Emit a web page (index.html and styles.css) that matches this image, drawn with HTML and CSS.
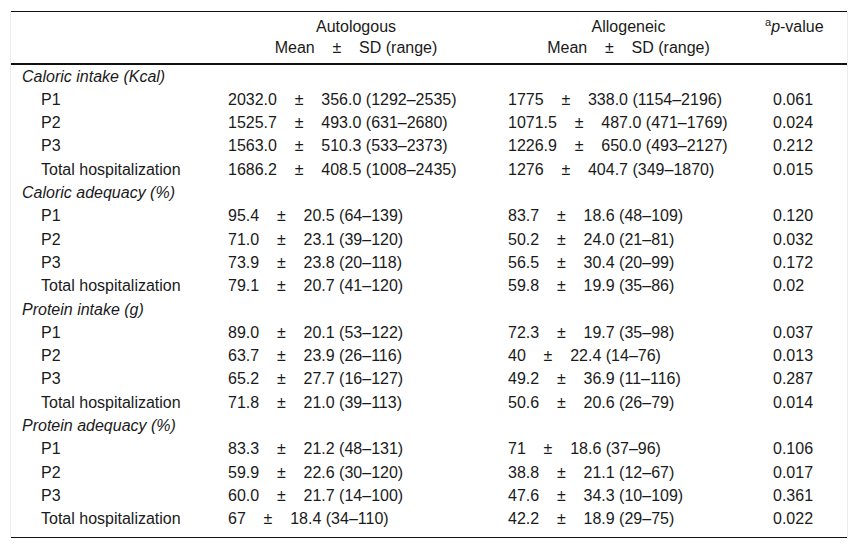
FILE: index.html
```html
<!DOCTYPE html>
<html>
<head>
<meta charset="utf-8">
<link rel="stylesheet" href="styles.css">
</head>
<body>
<div class="wrap">
<table class="tbl">
<colgroup><col class="c-label"><col class="c-auto"><col class="c-allo"><col class="c-p"></colgroup>
<thead>
<tr class="h1">
<th></th>
<th class="hc">Autologous</th>
<th class="hc">Allogeneic</th>
<th class="hp" rowspan="2"><sup>a</sup><i>p</i>-value</th>
</tr>
<tr class="h2">
<th></th>
<th class="hc">Mean<span class="pm">±</span>SD (range)</th>
<th class="hc">Mean<span class="pm">±</span>SD (range)</th>
</tr>
</thead>
<tbody>
<tr><td class="grp" colspan="4">Caloric intake (Kcal)</td></tr>
<tr><td class="lbl">P1</td><td>2032.0<span class="pm">±</span>356.0 (1292–2535)</td><td>1775<span class="pm">±</span>338.0 (1154–2196)</td><td>0.061</td></tr>
<tr><td class="lbl">P2</td><td>1525.7<span class="pm">±</span>493.0 (631–2680)</td><td>1071.5<span class="pm">±</span>487.0 (471–1769)</td><td>0.024</td></tr>
<tr><td class="lbl">P3</td><td>1563.0<span class="pm">±</span>510.3 (533–2373)</td><td>1226.9<span class="pm">±</span>650.0 (493–2127)</td><td>0.212</td></tr>
<tr><td class="lbl">Total hospitalization</td><td>1686.2<span class="pm">±</span>408.5 (1008–2435)</td><td>1276<span class="pm">±</span>404.7 (349–1870)</td><td>0.015</td></tr>
<tr><td class="grp" colspan="4">Caloric adequacy (%)</td></tr>
<tr><td class="lbl">P1</td><td>95.4<span class="pm">±</span>20.5 (64–139)</td><td>83.7<span class="pm">±</span>18.6 (48–109)</td><td>0.120</td></tr>
<tr><td class="lbl">P2</td><td>71.0<span class="pm">±</span>23.1 (39–120)</td><td>50.2<span class="pm">±</span>24.0 (21–81)</td><td>0.032</td></tr>
<tr><td class="lbl">P3</td><td>73.9<span class="pm">±</span>23.8 (20–118)</td><td>56.5<span class="pm">±</span>30.4 (20–99)</td><td>0.172</td></tr>
<tr><td class="lbl">Total hospitalization</td><td>79.1<span class="pm">±</span>20.7 (41–120)</td><td>59.8<span class="pm">±</span>19.9 (35–86)</td><td>0.02</td></tr>
<tr><td class="grp" colspan="4">Protein intake (g)</td></tr>
<tr><td class="lbl">P1</td><td>89.0<span class="pm">±</span>20.1 (53–122)</td><td>72.3<span class="pm">±</span>19.7 (35–98)</td><td>0.037</td></tr>
<tr><td class="lbl">P2</td><td>63.7<span class="pm">±</span>23.9 (26–116)</td><td>40<span class="pm">±</span>22.4 (14–76)</td><td>0.013</td></tr>
<tr><td class="lbl">P3</td><td>65.2<span class="pm">±</span>27.7 (16–127)</td><td>49.2<span class="pm">±</span>36.9 (11–116)</td><td>0.287</td></tr>
<tr><td class="lbl">Total hospitalization</td><td>71.8<span class="pm">±</span>21.0 (39–113)</td><td>50.6<span class="pm">±</span>20.6 (26–79)</td><td>0.014</td></tr>
<tr><td class="grp" colspan="4">Protein adequacy (%)</td></tr>
<tr><td class="lbl">P1</td><td>83.3<span class="pm">±</span>21.2 (48–131)</td><td>71<span class="pm">±</span>18.6 (37–96)</td><td>0.106</td></tr>
<tr><td class="lbl">P2</td><td>59.9<span class="pm">±</span>22.6 (30–120)</td><td>38.8<span class="pm">±</span>21.1 (12–67)</td><td>0.017</td></tr>
<tr><td class="lbl">P3</td><td>60.0<span class="pm">±</span>21.7 (14–100)</td><td>47.6<span class="pm">±</span>34.3 (10–109)</td><td>0.361</td></tr>
<tr class="last"><td class="lbl">Total hospitalization</td><td>67<span class="pm">±</span>18.4 (34–110)</td><td>42.2<span class="pm">±</span>18.9 (29–75)</td><td>0.022</td></tr>
</tbody>
</table>
</div>
</body>
</html>
```
FILE: styles.css
```css
html, body {
  margin: 0;
  padding: 0;
  background: #fff;
}
body {
  font-family: "Liberation Sans", Arial, sans-serif;
  font-size: 16px;
  color: #1a1a1a;
}
.wrap {
  margin: 11px 0 0 10px;
  width: 836px;
  border-left: 1px solid #ececec;
  border-right: 1px solid #ececec;
}
.tbl {
  width: 836px;
  border-collapse: collapse;
  table-layout: fixed;
  border-top: 1px solid #111;
  border-bottom: 1px solid #111;
}
.c-label { width: 209px; }
.c-auto { width: 280px; }
.c-allo { width: 265px; }
.c-p { width: 82px; }
th {
  font-weight: normal;
  line-height: 21.3px;
  padding: 0 16px 0 8px;
  white-space: nowrap;
}
.h1 th { padding-top: 4px; }
.h2 th { padding-bottom: 4px; }
thead { border-bottom: 2px solid #111; }
.hc { text-align: center; }
.hp {
  text-align: left;
  vertical-align: top;
  padding: 4px 0 0 0;
}
.hp sup {
  font-size: 11px;
  line-height: 0;
  vertical-align: 6px;
}
td {
  line-height: 23.3px;
  padding: 0 0 0 8px;
  white-space: nowrap;
  vertical-align: middle;
}
td.grp {
  font-style: italic;
  padding-left: 11px;
}
td.lbl { padding-left: 30px; }
.last td { padding-bottom: 6px; }
.pm { margin: 0 17.8px; }
```
